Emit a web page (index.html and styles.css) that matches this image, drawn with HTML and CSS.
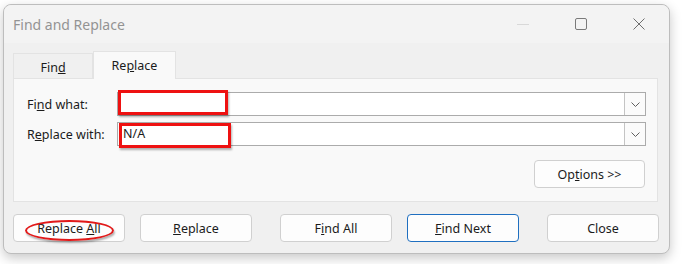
FILE: index.html
```html
<!DOCTYPE html>
<html>
<head>
<meta charset="utf-8">
<link rel="stylesheet" href="styles.css">
</head>
<body>
<div class="window">
  <div class="titlebar">
    <span class="title">Find and Replace</span>
    <div class="controls">
      <span class="ctl ctl-min"><span class="dash"></span></span>
      <span class="ctl ctl-max"><span class="square"></span></span>
      <span class="ctl ctl-close">
        <svg width="12" height="12" viewBox="0 0 12 12"><path d="M0.5 0.5L11.5 11.5M11.5 0.5L0.5 11.5" stroke="#6e6e6e" stroke-width="1" fill="none"/></svg>
      </span>
    </div>
  </div>
  <div class="tabs">
    <div class="tab">Fin<u>d</u></div>
    <div class="tab active">Re<u>p</u>lace</div>
  </div>
  <div class="panel">
    <div class="row">
      <label class="lbl">Fi<u>n</u>d what:</label>
      <div class="combo">
        <div class="combo-text"></div>
        <div class="combo-btn"><svg width="9" height="5" viewBox="0 0 9 5"><path d="M0.5 0.5L4.5 4.5L8.5 0.5" stroke="#606060" fill="none"/></svg></div>
        <span class="mark mark1"></span>
      </div>
    </div>
    <div class="row">
      <label class="lbl">R<u>e</u>place with:</label>
      <div class="combo">
        <div class="combo-text">N/A</div>
        <div class="combo-btn"><svg width="9" height="5" viewBox="0 0 9 5"><path d="M0.5 0.5L4.5 4.5L8.5 0.5" stroke="#606060" fill="none"/></svg></div>
        <span class="mark mark2"></span>
      </div>
    </div>
    <div class="options-row">
      <button class="btn btn-options">Op<u>t</u>ions &gt;&gt;</button>
    </div>
  </div>
  <div class="buttons">
    <button class="btn b1">Replace <u>A</u>ll<span class="ellipse"></span></button>
    <button class="btn b2"><u>R</u>eplace</button>
    <button class="btn b3">F<u>i</u>nd All</button>
    <button class="btn b4 primary"><u>F</u>ind Next</button>
    <button class="btn b5">Close</button>
  </div>
</div>
</body>
</html>
```

FILE: styles.css
```css
html, body {
  margin: 0;
  padding: 0;
  background: #ffffff;
}
body {
  width: 682px;
  height: 264px;
  overflow: hidden;
  font-family: "Noto Sans", "Open Sans", sans-serif;
  font-size: 12px;
  color: #1b1b1b;
}
.window {
  box-sizing: border-box;
  margin-left: 3px;
  margin-top: 4px;
  width: 667px;
  height: 250px;
  border: 1px solid #bdbdbd;
  border-radius: 8px;
  background: #f0f0f0;
  box-shadow: 0 4px 12px rgba(0,0,0,0.22);
  padding: 0 11px 0 9px;
  display: flex;
  flex-direction: column;
}
.titlebar {
  height: 38px;
  display: flex;
  align-items: center;
  justify-content: space-between;
  background: #f3f3f3;
  margin: 0 -11px 0 -9px;
  padding-left: 9px;
  border-radius: 8px 8px 0 0;
}
.title {
  font-size: 14px;
  color: #939393;
}
.controls {
  display: flex;
  align-items: center;
  height: 100%;
  margin-right: 1px;
}
.ctl {
  display: flex;
  align-items: center;
  justify-content: center;
  width: 58px;
  height: 100%;
}
.dash {
  display: block;
  width: 12px;
  height: 1px;
  background: #d8d8d8;
}
.square {
  display: block;
  width: 10px;
  height: 10px;
  border: 1px solid #7a7a7a;
  border-radius: 2px;
}
.tabs {
  display: flex;
  align-items: flex-end;
  margin-top: 8px;
  height: 27px;
  position: relative;
  z-index: 1;
}
.tab {
  box-sizing: border-box;
  width: 80px;
  height: 25px;
  display: flex;
  align-items: center;
  justify-content: center;
  border: 1px solid #e3e3e3;
  border-bottom: none;
  background: #f0f0f0;
  font-size: 12.5px;
  padding-top: 2px;
}
.tab.active {
  width: 83px;
  height: 28px;
  background: #f9f9f9;
  margin-bottom: -1px;
  padding-top: 0;
}
.panel {
  box-sizing: border-box;
  height: 124px;
  border: 1px solid #e3e3e3;
  background: #f9f9f9;
  padding: 13px 11px 0 13px;
}
.row {
  display: flex;
  align-items: center;
  height: 24px;
  margin-bottom: 6px;
}
.lbl {
  width: 90px;
  font-size: 12.5px;
}
.combo {
  box-sizing: border-box;
  position: relative;
  flex: 1;
  height: 24px;
  border: 1px solid #ababab;
  background: #ffffff;
  display: flex;
}
.combo-text {
  flex: 1;
  padding-left: 5px;
  line-height: 22px;
  font-size: 12.5px;
}
.combo-btn {
  box-sizing: border-box;
  width: 21px;
  height: 22px;
  border-left: 1px solid #c4c4c4;
  background: #fbfbfb;
  display: flex;
  align-items: center;
  justify-content: center;
}
.mark {
  position: absolute;
  box-sizing: border-box;
  border: 3px solid #ee1111;
  box-shadow: 1px 2px 2px rgba(0,0,0,0.3);
}
.mark1 { left: 0px; top: -3px; width: 110px; height: 25px; }
.mark2 { left: 1px; top: 0px; width: 112px; height: 25px; }
.options-row {
  display: flex;
  justify-content: flex-end;
  padding-top: 8px;
  padding-right: 1px;
}
.btn {
  box-sizing: border-box;
  flex-shrink: 0;
  font-family: "Noto Sans", "Open Sans", sans-serif;
  font-size: 12.5px;
  color: #1b1b1b;
  height: 28px;
  width: 112px;
  border: 1px solid #d0d0d0;
  border-radius: 4px;
  background: #fdfdfd;
  padding: 0;
  position: relative;
}
.btn-options { width: 111px; }
.buttons {
  display: flex;
  margin-top: 12px;
}
.b2 { margin-left: 15px; }
.b3 { margin-left: 28px; }
.b4 { margin-left: 15px; }
.b5 { margin-left: 28px; }
.primary { border-color: #1f6fc0; }
.ellipse {
  position: absolute;
  left: 11px;
  top: 5px;
  width: 89px;
  height: 21px;
  box-sizing: border-box;
  border: 2px solid #e11a1a;
  border-radius: 50%;
  box-shadow: 1px 2px 2px rgba(0,0,0,0.3);
}
```
